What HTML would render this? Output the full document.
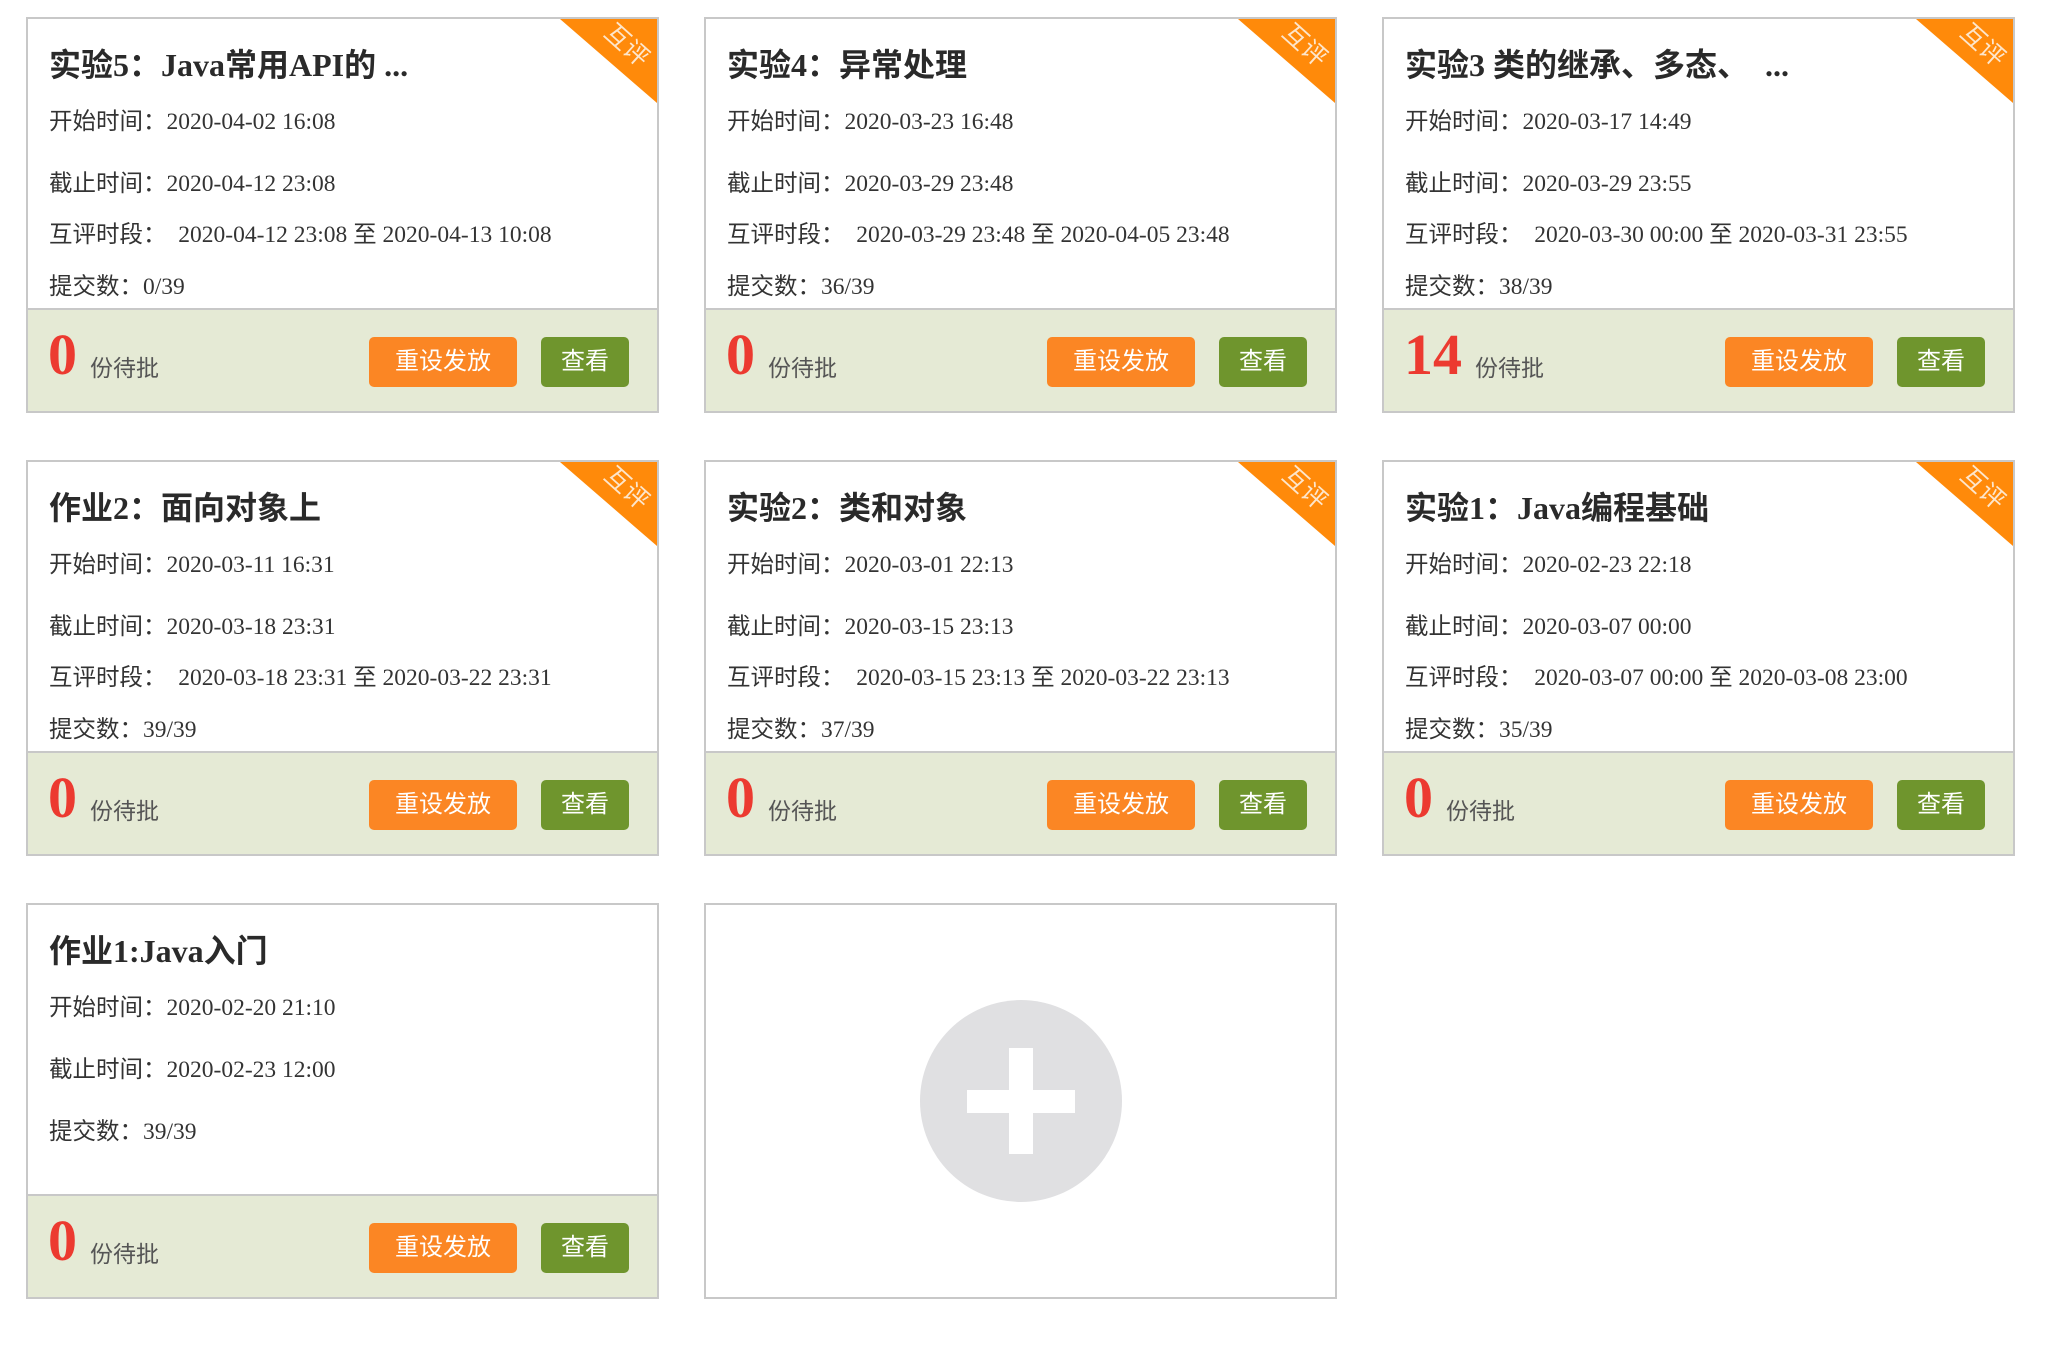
<!DOCTYPE html>
<html><head><meta charset="utf-8"><style>
*{margin:0;padding:0;box-sizing:border-box}
body{width:2072px;height:1348px;background:#fff;position:relative;overflow:hidden;font-family:"Liberation Serif","Noto Sans CJK SC",serif;color:#333}
.card{position:absolute;width:633px;height:396px;border:2px solid #c8c8c8;background:#fff;overflow:hidden}
.t{position:absolute;left:21px;top:27px;font-size:32px;font-weight:bold;line-height:38px;white-space:nowrap;color:#2a2a2a}
.r{position:absolute;left:21px;font-size:23.5px;line-height:28px;white-space:nowrap}
.f{position:absolute;left:0;right:0;bottom:0;height:103px;background:#e5ead5;border-top:2px solid #c8c8c8}
.n{position:absolute;left:20px;top:14px;font-size:58px;font-weight:bold;color:#ec3a30;line-height:62px}
.w{position:absolute;top:44px;font-size:23px;color:#555;line-height:30px}
.b1,.b2{position:absolute;top:27px;height:50px;border-radius:5px;color:#fff;font-size:24px;line-height:50px;text-align:center}
.b1{left:341px;width:148px;background:#fb8624}
.b2{left:513px;width:88px;background:#6f952d}
.rib{position:absolute;right:0;top:0;width:0;height:0;border-top:84px solid #ff8a0a;border-left:97px solid transparent}
.rt{position:absolute;right:4px;top:11px;transform:rotate(42deg);color:#fde6cc;font-size:25px;font-family:"Noto Sans CJK SC",sans-serif;line-height:28px}
</style></head><body>

<div class="card" style="left:26px;top:17px">
<div class="rib"></div><div class="rt">互评</div>
<div class="t">实验5：Java常用API的 ...</div>
<div class="r" style="top:89px">开始时间：2020-04-02 16:08</div>
<div class="r" style="top:151px">截止时间：2020-04-12 23:08</div>
<div class="r" style="top:202px">互评时段：&nbsp; 2020-04-12 23:08 至 2020-04-13 10:08</div>
<div class="r" style="top:254px">提交数：0/39</div>
<div class="f"><div class="n">0</div><div class="w" style="left:62px">份待批</div><div class="b1">重设发放</div><div class="b2">查看</div></div>
</div>

<div class="card" style="left:704px;top:17px">
<div class="rib"></div><div class="rt">互评</div>
<div class="t">实验4：异常处理</div>
<div class="r" style="top:89px">开始时间：2020-03-23 16:48</div>
<div class="r" style="top:151px">截止时间：2020-03-29 23:48</div>
<div class="r" style="top:202px">互评时段：&nbsp; 2020-03-29 23:48 至 2020-04-05 23:48</div>
<div class="r" style="top:254px">提交数：36/39</div>
<div class="f"><div class="n">0</div><div class="w" style="left:62px">份待批</div><div class="b1">重设发放</div><div class="b2">查看</div></div>
</div>

<div class="card" style="left:1382px;top:17px">
<div class="rib"></div><div class="rt">互评</div>
<div class="t">实验3 类的继承、多态、&nbsp; ...</div>
<div class="r" style="top:89px">开始时间：2020-03-17 14:49</div>
<div class="r" style="top:151px">截止时间：2020-03-29 23:55</div>
<div class="r" style="top:202px">互评时段：&nbsp; 2020-03-30 00:00 至 2020-03-31 23:55</div>
<div class="r" style="top:254px">提交数：38/39</div>
<div class="f"><div class="n">14</div><div class="w" style="left:91px">份待批</div><div class="b1">重设发放</div><div class="b2">查看</div></div>
</div>

<div class="card" style="left:26px;top:460px">
<div class="rib"></div><div class="rt">互评</div>
<div class="t">作业2：面向对象上</div>
<div class="r" style="top:89px">开始时间：2020-03-11 16:31</div>
<div class="r" style="top:151px">截止时间：2020-03-18 23:31</div>
<div class="r" style="top:202px">互评时段：&nbsp; 2020-03-18 23:31 至 2020-03-22 23:31</div>
<div class="r" style="top:254px">提交数：39/39</div>
<div class="f"><div class="n">0</div><div class="w" style="left:62px">份待批</div><div class="b1">重设发放</div><div class="b2">查看</div></div>
</div>

<div class="card" style="left:704px;top:460px">
<div class="rib"></div><div class="rt">互评</div>
<div class="t">实验2：类和对象</div>
<div class="r" style="top:89px">开始时间：2020-03-01 22:13</div>
<div class="r" style="top:151px">截止时间：2020-03-15 23:13</div>
<div class="r" style="top:202px">互评时段：&nbsp; 2020-03-15 23:13 至 2020-03-22 23:13</div>
<div class="r" style="top:254px">提交数：37/39</div>
<div class="f"><div class="n">0</div><div class="w" style="left:62px">份待批</div><div class="b1">重设发放</div><div class="b2">查看</div></div>
</div>

<div class="card" style="left:1382px;top:460px">
<div class="rib"></div><div class="rt">互评</div>
<div class="t">实验1：Java编程基础</div>
<div class="r" style="top:89px">开始时间：2020-02-23 22:18</div>
<div class="r" style="top:151px">截止时间：2020-03-07 00:00</div>
<div class="r" style="top:202px">互评时段：&nbsp; 2020-03-07 00:00 至 2020-03-08 23:00</div>
<div class="r" style="top:254px">提交数：35/39</div>
<div class="f"><div class="n">0</div><div class="w" style="left:62px">份待批</div><div class="b1">重设发放</div><div class="b2">查看</div></div>
</div>

<div class="card" style="left:26px;top:903px">
<div class="t">作业1:Java入门</div>
<div class="r" style="top:89px">开始时间：2020-02-20 21:10</div>
<div class="r" style="top:151px">截止时间：2020-02-23 12:00</div>
<div class="r" style="top:213px">提交数：39/39</div>
<div class="f"><div class="n">0</div><div class="w" style="left:62px">份待批</div><div class="b1">重设发放</div><div class="b2">查看</div></div>
</div>

<div class="card" style="left:704px;top:903px">
<div style="position:absolute;left:214px;top:95px;width:202px;height:202px;border-radius:50%;background:#e0e0e2"></div>
<div style="position:absolute;left:261px;top:185px;width:108px;height:23px;background:#fff"></div>
<div style="position:absolute;left:303px;top:143px;width:24px;height:106px;background:#fff"></div>
</div>

</body></html>
